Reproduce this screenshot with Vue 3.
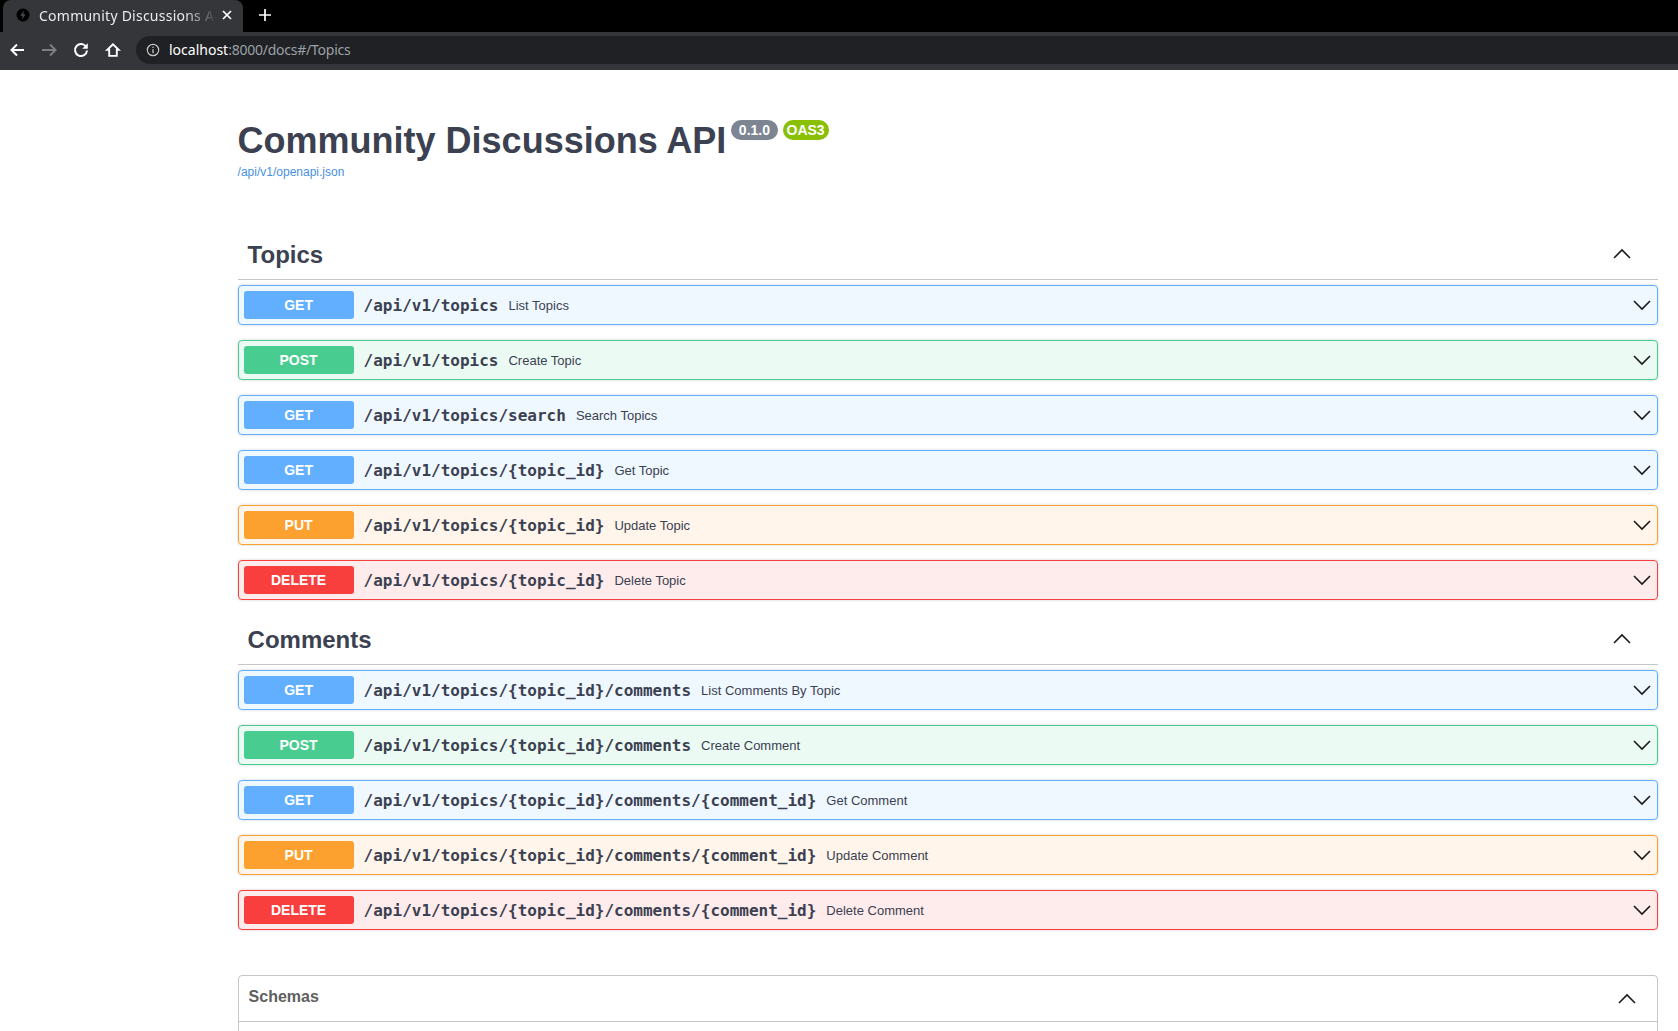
<template>
  <div class="browser">
    <div class="tabstrip">
      <div class="tab">
        <span class="favicon">
          <svg viewBox="0 0 14 14" width="14" height="14">
            <circle cx="7" cy="7" r="6.5" fill="#000" />
            <path d="M7.8 2.600 4.400 7.700h2.200l-.5 3.700 3.500-5.200H7.300z" fill="#4a4b4f" />
          </svg>
        </span>
        <span class="tab-title">Community Discussions A</span>
        <svg class="tab-close" viewBox="0 0 10 10" width="10" height="10">
          <path d="M1 1l8 8M9 1l-8 8" stroke="#fff" stroke-width="1.7" fill="none" />
        </svg>
      </div>
      <svg class="new-tab" viewBox="0 0 12 12" width="12" height="12">
        <path d="M6 0v12M0 6h12" stroke="#fff" stroke-width="1.7" fill="none" />
      </svg>
    </div>
    <div class="toolbar">
      <svg class="nav" viewBox="0 0 16 16" width="16" height="16">
        <path d="M15 8H2.500M8 2.500 2.500 8 8 13.500" stroke="#fff" stroke-width="2" fill="none" />
      </svg>
      <svg class="nav" viewBox="0 0 16 16" width="16" height="16">
        <path d="M1 8h13.500M9 2.500 14.500 8 9 13.500" stroke="#7d7e81" stroke-width="2" fill="none" />
      </svg>
      <svg class="nav" viewBox="0 0 16 16" width="16" height="16">
        <path d="M13.300 5.200A6 6 0 1 0 14 8.500" stroke="#fff" stroke-width="2" fill="none" />
        <path d="M14.800 1.200v5.600H9.200z" fill="#fff" />
      </svg>
      <svg class="nav" viewBox="0 0 16 16" width="16" height="16">
        <path d="M8 2.300 2.300 7.900h1.900v6h7.600v-6h1.900z" stroke="#fff" stroke-width="1.900" fill="none" />
      </svg>
      <div class="omnibox">
        <svg viewBox="0 0 14 14" width="14" height="14">
          <circle cx="7" cy="7" r="5.700" stroke="#c4c7c5" stroke-width="1.200" fill="none" />
          <path d="M7 6.200v4M7 3.800v1.300" stroke="#c4c7c5" stroke-width="1.300" fill="none" />
        </svg>
        <span class="url"><b>localhost</b>:8000/docs#/Topics</span>
      </div>
    </div>
  </div>

  <div class="wrapper">
    <div class="info">
      <div class="title-row">
        <h2>Community Discussions API</h2>
        <span class="pill version">0.1.0</span>
        <span class="pill oas">OAS3</span>
      </div>
      <a class="spec-link">/api/v1/openapi.json</a>
    </div>

    <section v-for="group in groups" :key="group.name" class="group">
      <div class="group-head">
        <h3>{{ group.name }}</h3>
        <svg class="chevron up" viewBox="0 0 20 20" width="20" height="20">
          <path d="M2 13 10 5l8 8" />
        </svg>
      </div>
      <div v-for="op in group.ops" :key="op.method + op.path" class="op" :class="op.method">
        <span class="method">{{ op.method.toUpperCase() }}</span>
        <span class="path">{{ op.path }}</span>
        <span class="desc">{{ op.desc }}</span>
        <svg class="chevron" viewBox="0 0 20 20" width="20" height="20">
          <path d="M2 6l8 8 8-8" />
        </svg>
      </div>
    </section>

    <section class="schemas">
      <div class="schemas-head">
        <span class="schemas-title">Schemas</span>
        <svg class="chevron" viewBox="0 0 20 20" width="20" height="20">
          <path d="M2 14 10 6l8 8" />
        </svg>
      </div>
    </section>
  </div>
</template>

<script setup>
const topic = '/api/v1/topics/{topic_id}'
const comment = `${topic}/comments/{comment_id}`

const groups = [
  {
    name: 'Topics',
    ops: [
      { method: 'get', path: '/api/v1/topics', desc: 'List Topics' },
      { method: 'post', path: '/api/v1/topics', desc: 'Create Topic' },
      { method: 'get', path: '/api/v1/topics/search', desc: 'Search Topics' },
      { method: 'get', path: topic, desc: 'Get Topic' },
      { method: 'put', path: topic, desc: 'Update Topic' },
      { method: 'delete', path: topic, desc: 'Delete Topic' }
    ]
  },
  {
    name: 'Comments',
    ops: [
      { method: 'get', path: `${topic}/comments`, desc: 'List Comments By Topic' },
      { method: 'post', path: `${topic}/comments`, desc: 'Create Comment' },
      { method: 'get', path: comment, desc: 'Get Comment' },
      { method: 'put', path: comment, desc: 'Update Comment' },
      { method: 'delete', path: comment, desc: 'Delete Comment' }
    ]
  }
]
</script>

<style>
html,
body {
  margin: 0;
  background: #fff;
  overflow: hidden;
}
</style>

<style scoped>
.browser {
  height: 70px;
  background: #000;
  font-family: "Noto Sans", sans-serif;
}

.tabstrip {
  display: flex;
  align-items: center;
  height: 32px;
  padding-left: 3px;
}

.tab {
  display: flex;
  align-items: center;
  width: 240px;
  height: 32px;
  padding: 0 11px 2px 13px;
  box-sizing: border-box;
  background: #35363a;
  border-radius: 8px 8px 0 0;
  color: #e8eaed;
}

.favicon {
  display: flex;
  margin-right: 9px;
}

.tab-title {
  flex: 1;
  white-space: nowrap;
  font-size: 14px;
  letter-spacing: 0.24px;
  -webkit-mask-image: linear-gradient(to right, #000 145px, transparent 178px);
  mask-image: linear-gradient(to right, #000 145px, transparent 178px);
}

.new-tab {
  margin: 0 0 3px 16px;
}

.toolbar {
  display: flex;
  align-items: center;
  height: 38px;
  padding: 0 0 2px 9px;
  box-sizing: border-box;
  background: #35363a;
}

.nav {
  margin-right: 16px;
  flex: none;
}

.omnibox {
  display: flex;
  align-items: center;
  flex: 1;
  height: 28px;
  margin-left: -1px;
  padding-left: 10px;
  background: #202124;
  border-radius: 14px 0 0 14px;
}

.url {
  margin: 0 0 2px 9px;
  font-size: 14px;
  letter-spacing: -0.24px;
  color: #9aa0a6;
}

.url b {
  font-weight: 400;
  letter-spacing: 0;
  color: #fff;
}

.wrapper {
  max-width: 1420px;
  margin-left: 217.6px;
  padding: 0 20px;
  font-family: "Liberation Sans", Arial, sans-serif;
  color: #3b4151;
}

.info {
  padding-top: 50px;
  height: 160px;
  box-sizing: border-box;
}

.title-row {
  display: flex;
  align-items: flex-start;
}

h2 {
  margin: 0;
  font-size: 36px;
  line-height: 41px;
  font-weight: 700;
}

.pill {
  margin: 0 0 0 5px;
  padding: 2px 4px;
  height: 20px;
  box-sizing: border-box;
  border-radius: 57px;
  color: #fff;
  font-size: 14px;
  line-height: 16px;
  font-weight: 700;
}

.version {
  margin-left: 5px;
  padding: 2px 7.5px;
  background: #7d8492;
}

.oas {
  background: #89bf04;
}

.spec-link {
  display: block;
  margin-top: 3px;
  font-size: 12px;
  line-height: 16px;
  color: #4990e2;
}

.group-head {
  display: flex;
  align-items: center;
  justify-content: space-between;
  height: 50px;
  padding: 0 26px 0 10px;
  box-sizing: border-box;
  border-bottom: 1px solid rgba(59, 65, 81, 0.3);
  margin-bottom: 5px;
}

.group-head h3 {
  margin: 0;
  font-size: 24px;
  font-weight: 700;
}

.op {
  display: flex;
  align-items: center;
  height: 40px;
  margin-bottom: 15px;
  padding: 0 5px;
  box-sizing: border-box;
  border: 1px solid;
  border-radius: 4px;
  box-shadow: 0 0 3px rgba(0, 0, 0, 0.19);
}

.method {
  width: 110px;
  height: 28px;
  flex: none;
  border-radius: 3px;
  color: #fff;
  font-size: 14px;
  line-height: 28px;
  font-weight: 700;
  text-align: center;
}

.path {
  margin-left: 10px;
  padding-right: 10px;
  font-family: "DejaVu Sans Mono", monospace;
  font-size: 16px;
  font-weight: 700;
}

.desc {
  flex: 1;
  font-size: 13px;
}

.chevron {
  flex: none;
}

.chevron path {
  fill: none;
  stroke: #1a1a1a;
  stroke-width: 1.6;
}

.get {
  background: rgba(97, 175, 254, 0.1);
  border-color: #61affe;
}

.get .method {
  background: #61affe;
}

.post {
  background: rgba(73, 204, 144, 0.1);
  border-color: #49cc90;
}

.post .method {
  background: #49cc90;
}

.put {
  background: rgba(252, 161, 48, 0.1);
  border-color: #fca130;
}

.put .method {
  background: #fca130;
}

.delete {
  background: rgba(249, 62, 62, 0.1);
  border-color: #f93e3e;
}

.delete .method {
  background: #f93e3e;
}

.schemas {
  margin-top: 45px;
  height: 100px;
  border: 1px solid rgba(59, 65, 81, 0.3);
  border-radius: 4px;
}

.schemas-head {
  display: flex;
  align-items: center;
  justify-content: space-between;
  height: 45px;
  padding: 0 20px 0 10px;
  border-bottom: 1px solid rgba(59, 65, 81, 0.3);
  font-size: 16px;
  font-weight: 700;
  color: #606060;
}

.schemas-title {
  margin-bottom: 3px;
}
</style>
